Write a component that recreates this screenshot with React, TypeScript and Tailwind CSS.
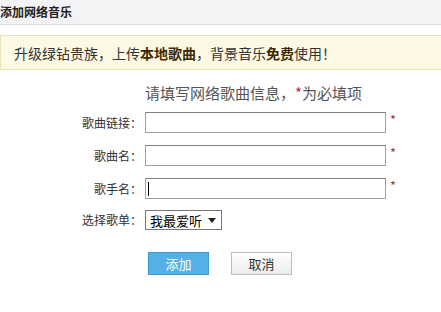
import React from "react";

const font = { fontFamily: '"Noto Sans CJK SC", "Noto Sans", sans-serif' };

function Row({ label, caret }: { label: string; caret?: boolean }) {
  return (
    <div className="flex items-center h-[21px]">
      <div className="w-[145px] pr-[3px] text-right text-[12px] text-[#333] leading-none">{label}</div>
      <div className="w-[241px] h-[21px] border border-[#a0a0a0] border-t-[#7f7f7f] bg-white flex items-center pl-[2px]">
        {caret ? <div className="w-px h-[14px] bg-black" /> : null}
      </div>
      <span className="ml-[4px] -mt-[6px] text-[13px] text-[#a8384a] leading-none">*</span>
    </div>
  );
}

export default function App() {
  return (
    <div className="w-[441px] h-[312px] bg-white overflow-hidden" style={font}>
      <div className="h-[25px] bg-[#f3f3f5] border-b border-[#dcdae6] flex items-center">
        <span className="text-[12px] font-bold text-[#222] leading-none">添加网络音乐</span>
      </div>
      <div className="mt-[10px] h-[35px] bg-[#fef9e4] border border-[#ebe3b5] border-r-0 flex items-center pl-[13px] text-[14px] text-[#333] leading-none">
        升级绿钻贵族，上传<b className="text-[#3f2a00]">本地歌曲</b>，背景音乐<b className="text-[#3f2a00]">免费</b>使用！
      </div>
      <div className="mt-[14px] pl-[145px] h-[16px] flex items-center text-[15px] text-[#555] leading-none">
        请填写网络歌曲信息，<span className="text-[#a8384a]">*</span>为必填项
      </div>
      <div className="mt-[12px] flex flex-col gap-[12px]">
        <Row label="歌曲链接：" />
        <Row label="歌曲名：" />
        <Row label="歌手名：" caret />
      </div>
      <div className="mt-[11px] flex items-center h-[20px]">
        <div className="w-[145px] pr-[3px] text-right text-[12px] text-[#333] leading-none">选择歌单：</div>
        <div className="w-[77px] h-[20px] border border-[#777] bg-white flex items-center justify-between pl-[4px] pr-[5px]">
          <span className="text-[13px] text-black leading-none">我最爱听</span>
          <svg width="8" height="5" viewBox="0 0 8 5"><path d="M0 0 L8 0 L4 5 Z" fill="#222" /></svg>
        </div>
      </div>
      <div className="mt-[22px] flex pl-[148px] gap-[22px]">
        <button className="w-[61px] h-[23px] bg-[#55b0e6] border border-[#3f98cf] text-white text-[13px] leading-none">添加</button>
        <button className="w-[61px] h-[23px] bg-gradient-to-b from-white to-[#ececec] border border-[#bdbdbd] text-[#333] text-[13px] leading-none">取消</button>
      </div>
    </div>
  );
}
